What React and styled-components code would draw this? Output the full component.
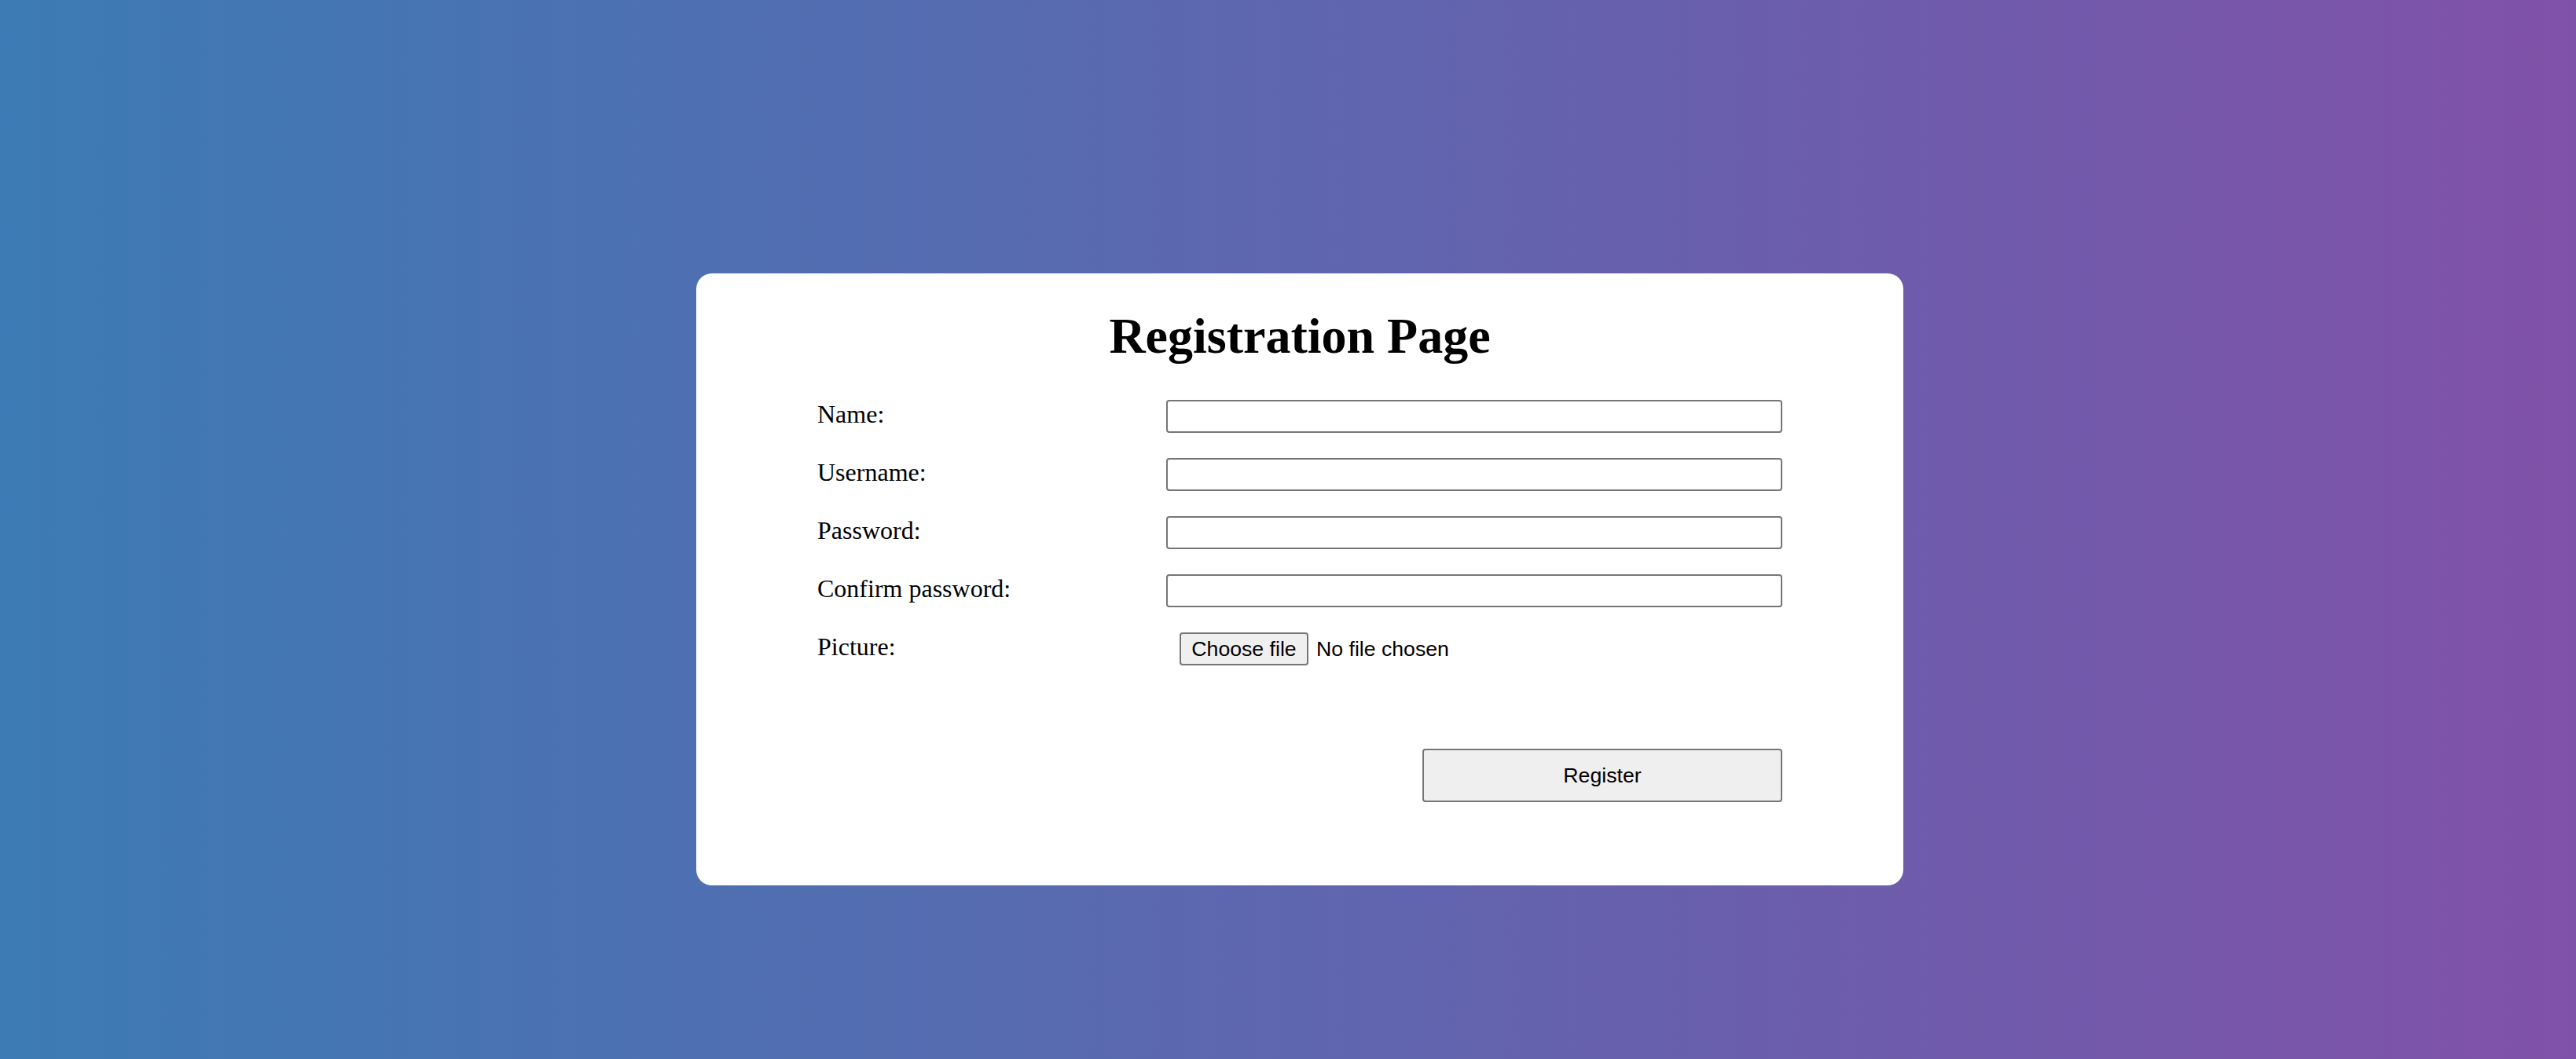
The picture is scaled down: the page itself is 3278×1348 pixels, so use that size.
import React from "react";
import styled, { createGlobalStyle } from "styled-components";

const GlobalStyle = createGlobalStyle`
  html, body {
    margin: 0;
    padding: 0;
  }

  body {
    font-family: "Liberation Serif", "Times New Roman", serif;
    color: #000;
  }
`;

const FIELDS = [
  { id: "name", label: "Name:", type: "text" },
  { id: "username", label: "Username:", type: "text" },
  { id: "password", label: "Password:", type: "password" },
  { id: "confirm", label: "Confirm password:", type: "password" },
];

const App = () => {
  const [fileName, setFileName] = React.useState("");

  return (
    <Page>
      <GlobalStyle />
      <Card>
        <Title>Registration Page</Title>
        <Form onSubmit={(e) => e.preventDefault()}>
          {FIELDS.map((field) => (
            <React.Fragment key={field.id}>
              <Label htmlFor={field.id}>{field.label}</Label>
              <TextInput id={field.id} name={field.id} type={field.type} />
            </React.Fragment>
          ))}

          <Label htmlFor="picture">Picture:</Label>
          <FilePicker>
            <HiddenFile
              id="picture"
              type="file"
              accept="image/*"
              onChange={(e) => setFileName(e.target.files[0]?.name || "")}
            />
            <FileButton>Choose file</FileButton>
            <FileStatus>{fileName || "No file chosen"}</FileStatus>
          </FilePicker>

          <Actions>
            <SubmitButton type="submit">Register</SubmitButton>
          </Actions>
        </Form>
      </Card>
    </Page>
  );
};

const Page = styled.div`
  min-height: 1348px;
  box-sizing: border-box;
  display: flex;
  justify-content: center;
  align-items: flex-start;
  padding: 348px 0 0 30px;
  background: linear-gradient(to right, #3c7bb5, #8051a8);
`;

const Card = styled.div`
  width: 1536px;
  box-sizing: border-box;
  padding: 0 154px 106px;
  background: #fff;
  border-radius: 20px;
  overflow: hidden;
`;

const Title = styled.h1`
  margin: 43px 0 44px;
  font-size: 64px;
  font-weight: bold;
  line-height: 74px;
  text-align: center;
`;

const Form = styled.form`
  display: grid;
  grid-template-columns: 444px 784px;
  row-gap: 32px;
  align-items: start;
`;

const Label = styled.label`
  font-size: 32px;
  line-height: 37px;
`;

const TextInput = styled.input`
  box-sizing: border-box;
  width: 784px;
  height: 42px;
  margin: 0;
  padding: 0 4px;
  border: 2px solid #767676;
  border-radius: 4px;
  background: #fff;
  font-family: "Liberation Sans", Arial, sans-serif;
  font-size: 26px;
`;

const FilePicker = styled.label`
  display: flex;
  align-items: center;
  gap: 10px;
  margin-left: 17px;
  font-family: "Liberation Sans", Arial, sans-serif;
  font-size: 26.67px;
  cursor: pointer;
`;

const HiddenFile = styled.input`
  display: none;
`;

const FileButton = styled.span`
  box-sizing: border-box;
  display: inline-flex;
  align-items: center;
  justify-content: center;
  width: 164px;
  height: 42px;
  border: 2px solid #767676;
  border-radius: 4px;
  background: #efefef;
`;

const FileStatus = styled.span`
  white-space: nowrap;
`;

const Actions = styled.div`
  grid-column: 1 / -1;
  display: flex;
  justify-content: flex-end;
  margin-top: 74px;
`;

const SubmitButton = styled.button`
  box-sizing: border-box;
  width: 458px;
  height: 68px;
  margin: 0;
  border: 2px solid #767676;
  border-radius: 4px;
  background: #efefef;
  color: #000;
  font-family: "Liberation Sans", Arial, sans-serif;
  font-size: 26.67px;
  cursor: pointer;
`;

export default App;
